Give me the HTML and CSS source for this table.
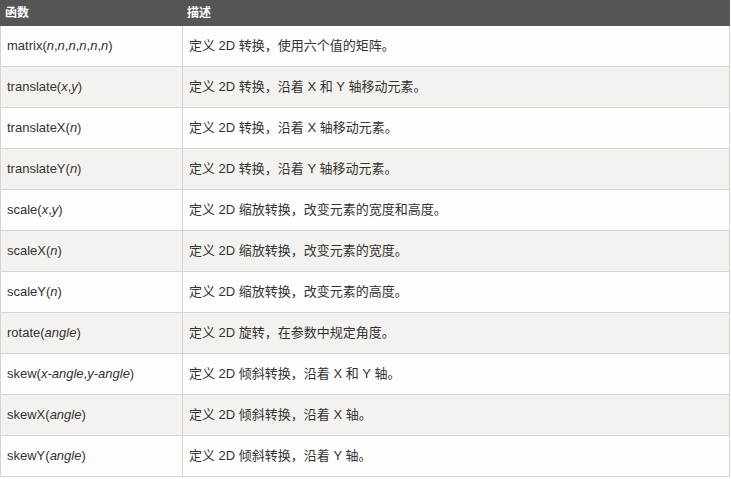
FILE: index.html
```html
<!DOCTYPE html>
<html lang="zh">
<head>
<meta charset="utf-8">
<title>2D 转换方法</title>
<link rel="stylesheet" href="styles.css">
</head>
<body>
<table class="ref">
<thead>
<tr><th class="c1">函数</th><th>描述</th></tr>
</thead>
<tbody>
<tr><td>matrix(<i>n</i>,<i>n</i>,<i>n</i>,<i>n</i>,<i>n</i>,<i>n</i>)</td><td>定义 2D 转换，使用六个值的矩阵。</td></tr>
<tr><td>translate(<i>x</i>,<i>y</i>)</td><td>定义 2D 转换，沿着 X 和 Y 轴移动元素。</td></tr>
<tr><td>translateX(<i>n</i>)</td><td>定义 2D 转换，沿着 X 轴移动元素。</td></tr>
<tr><td>translateY(<i>n</i>)</td><td>定义 2D 转换，沿着 Y 轴移动元素。</td></tr>
<tr><td>scale(<i>x</i>,<i>y</i>)</td><td>定义 2D 缩放转换，改变元素的宽度和高度。</td></tr>
<tr><td>scaleX(<i>n</i>)</td><td>定义 2D 缩放转换，改变元素的宽度。</td></tr>
<tr><td>scaleY(<i>n</i>)</td><td>定义 2D 缩放转换，改变元素的高度。</td></tr>
<tr><td>rotate(<i>angle</i>)</td><td>定义 2D 旋转，在参数中规定角度。</td></tr>
<tr><td>skew(<i>x-angle</i>,<i>y-angle</i>)</td><td>定义 2D 倾斜转换，沿着 X 和 Y 轴。</td></tr>
<tr><td>skewX(<i>angle</i>)</td><td>定义 2D 倾斜转换，沿着 X 轴。</td></tr>
<tr><td>skewY(<i>angle</i>)</td><td>定义 2D 倾斜转换，沿着 Y 轴。</td></tr>
</tbody>
</table>
</body>
</html>
```
FILE: styles.css
```css
html, body {
  margin: 0;
  padding: 0;
  background: #ffffff;
}
body {
  font-family: "Liberation Sans", Arial, "Noto Sans CJK SC", sans-serif;
  font-size: 13px;
  color: #333333;
}
.ref {
  width: 730px;
  border-collapse: collapse;
  table-layout: fixed;
}
.ref th {
  background: #555555;
  color: #ffffff;
  font-size: 12px;
  font-weight: bold;
  text-align: left;
  height: 25px;
  padding: 0 4px;
  box-sizing: border-box;
  border: 1px solid #555555;
  line-height: 16px;
}
.ref th.c1 {
  width: 182px;
}
.ref td {
  height: 40px;
  padding: 0 6px;
  border: 1px solid #d4d4d4;
  line-height: 18px;
  vertical-align: middle;
}
.ref tbody tr:nth-child(odd) td {
  background: #fdfdfd;
}
.ref tbody tr:nth-child(even) td {
  background: #f3f2ee;
}
.ref i {
  font-style: italic;
}
```
